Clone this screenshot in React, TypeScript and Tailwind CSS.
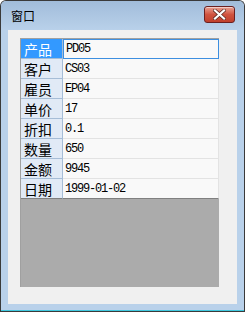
const rows: [string, string][] = [
  ['产品', 'PD05'],
  ['客户', 'CS03'],
  ['雇员', 'EP04'],
  ['单价', '17'],
  ['折扣', '0.1'],
  ['数量', '650'],
  ['金额', '9945'],
  ['日期', '1999-01-02'],
];

const cjk = { fontFamily: '"SimSun", "Noto Sans CJK SC", sans-serif' };
const mono = { fontFamily: '"Liberation Mono", "DejaVu Sans Mono", monospace' };

export default function App() {
  return (
    <div className="flex h-[312px] w-[245px] flex-col overflow-hidden rounded-t-[6px] border border-[#3a3a3a] border-b-0 bg-[#b9d1ea]">
      {/* title bar */}
      <div className="flex h-[29px] shrink-0 items-center justify-between bg-gradient-to-b from-[#a1bcda] to-[#b9d1ea] pl-[10px] pr-[9px]">
        <span className="text-[12px] leading-none text-black" style={cjk}>
          窗口
        </span>
        <div className="mt-[-3px] flex h-[17px] w-[31px] items-center justify-center rounded-[3px] border border-[#6b2020] bg-gradient-to-b from-[#e8a093] via-[#d0533f] to-[#c0402c] shadow-[inset_0_1px_0_rgba(255,255,255,0.5)]">
          <svg width="13" height="11" viewBox="0 0 13 11">
            <path
              d="M2 1.5 L11 9.5 M11 1.5 L2 9.5"
              stroke="#5a2a22"
              strokeWidth="3.6"
              strokeLinecap="square"
            />
            <path
              d="M2 1.5 L11 9.5 M11 1.5 L2 9.5"
              stroke="#ffffff"
              strokeWidth="2.2"
              strokeLinecap="square"
            />
          </svg>
        </div>
      </div>

      {/* client area */}
      <div className="mx-[7px] h-[274px] shrink-0 bg-[#f0f0f0] pl-[12px] pt-[8px]">
        <div className="flex h-[249px] w-[199px] flex-col border-l border-t border-[#a0a0a0] bg-[#ababab]">
          {rows.map(([label, value], i) => {
            const last = i === rows.length - 1;
            return (
              <div key={label} className="flex h-[20px] shrink-0">
                <div
                  className={`flex w-[42px] items-center border-b border-r pl-[3px] text-[14px] leading-none ${
                    i === 0 ? 'bg-[#3399ff] text-white' : 'bg-[#e1eaf6] text-black'
                  } ${last ? 'border-r-[#a6bdd7] border-b-[#808080]' : 'border-[#a6bdd7]'}`}
                  style={cjk}
                >
                  {label}
                </div>
                <div
                  className={`flex flex-1 items-center bg-[#f9f9f9] pl-[2px] text-[12px] leading-none tracking-[-1.2px] text-black ${
                    i === 0 ? 'border border-[#3d8fe0]' : 'border-b border-r border-[#e3e3e3]'
                  } ${last ? 'border-b-[#808080]' : ''}`}
                  style={mono}
                >
                  {value}
                </div>
              </div>
            );
          })}
        </div>
      </div>

      <div className="flex-1" />
      <div className="h-[1px] shrink-0 bg-[#3fc8de]" />
      <div className="h-[1px] shrink-0 bg-[#3a3a3a]" />
    </div>
  );
}
